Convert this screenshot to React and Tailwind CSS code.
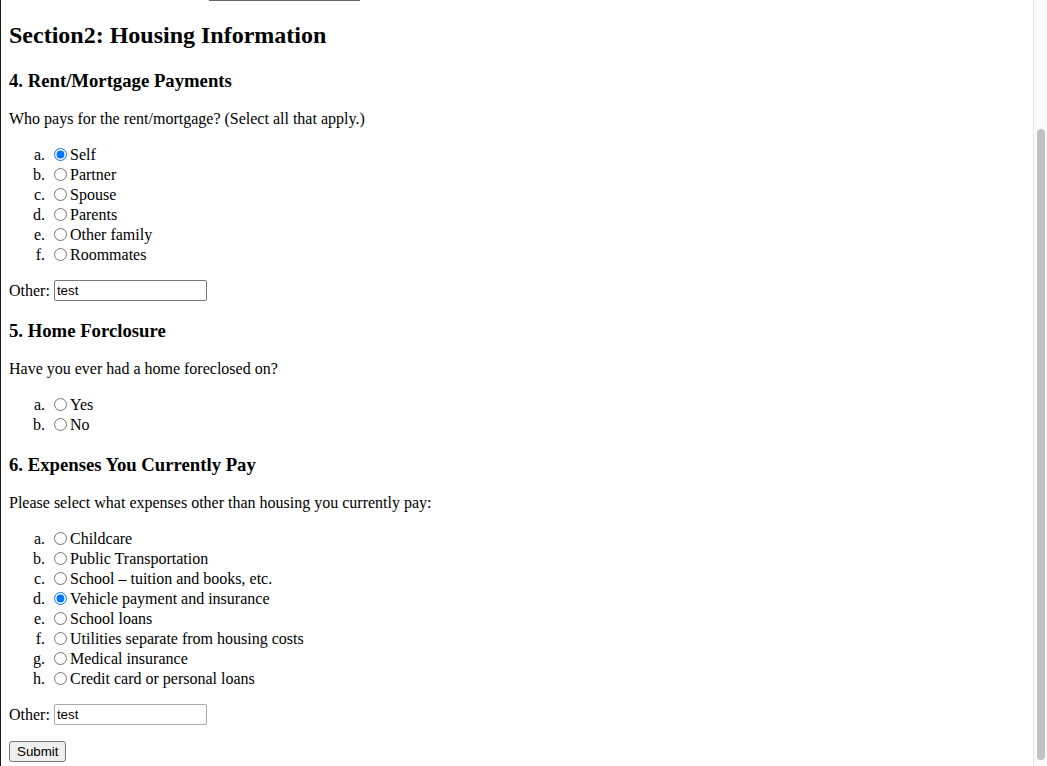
import React from "react";

const housingPayers = ["Self", "Partner", "Spouse", "Parents", "Other family", "Roommates"];
const expenses = [
  "Childcare",
  "Public Transportation",
  "School – tuition and books, etc.",
  "Vehicle payment and insurance",
  "School loans",
  "Utilities separate from housing costs",
  "Medical insurance",
  "Credit card or personal loans",
];

const RadioList = ({ name, items, checked, className = "" }) => (
  <ol className={`list-[lower-alpha] pl-[40px] ${className}`}>
    {items.map((item) => (
      <li key={item} className="h-[20px] pt-px leading-[19px]">
        <input
          type="radio"
          name={name + item}
          defaultChecked={item === checked}
          className="w-[13px] h-[13px] mt-[3px] mr-[3px] ml-[5px] align-[-1px] accent-[#0075ff]"
        />
        {item}
      </li>
    ))}
  </ol>
);

const OtherField = ({ className = "", dark }) => (
  <div className={`h-[22px] flex items-center ${className}`}>
    <span className="pt-px">Other:</span>
    <input
      type="text"
      defaultValue="test"
      className={`ml-[4px] w-[153px] h-[21px] border rounded-[2px] bg-white px-[2px] text-[13.33px] font-['Liberation_Sans',Arial,sans-serif] ${
        dark ? "border-[#767676]" : "border-[#a9a9a9]"
      }`}
    />
  </div>
);

export default function App() {
  return (
    <div className="flex h-[766px] overflow-hidden bg-white text-black font-['Liberation_Serif','Times_New_Roman',serif] text-[16px]">
      {/* Page */}
      <div className="flex-1 border-l border-[#1a1a1a] px-[8px]">
        <div className="ml-[200px] w-[151px] h-px bg-[#666]" />

        <h2 className="mt-[20px] text-[24px] leading-[28px] font-bold">Section2: Housing Information</h2>

        <h3 className="mt-[20px] pt-px text-[18.72px] leading-[21px] font-bold">4. Rent/Mortgage Payments</h3>
        <p className="mt-[18px] pt-px leading-[17px]">Who pays for the rent/mortgage? (Select all that apply.)</p>
        <RadioList name="payer" items={housingPayers} checked="Self" className="mt-[17px]" />
        <OtherField className="mt-[15px]" dark />

        <h3 className="mt-[18px] pt-px text-[18.72px] leading-[21px] font-bold">5. Home Forclosure</h3>
        <p className="mt-[18px] pt-px leading-[17px]">Have you ever had a home foreclosed on?</p>
        <RadioList name="foreclosure" items={["Yes", "No"]} className="mt-[17px]" />

        <h3 className="mt-[19px] pt-px text-[18.72px] leading-[21px] font-bold">6. Expenses You Currently Pay</h3>
        <p className="mt-[18px] pt-px leading-[17px]">Please select what expenses other than housing you currently pay:</p>
        <RadioList name="expense" items={expenses} checked="Vehicle payment and insurance" className="mt-[17px]" />
        <OtherField className="mt-[15px]" />

        <button className="mt-[16px] h-[21px] px-[7px] bg-[#efefef] border border-[#767676] rounded-[3px] text-[13.33px] leading-[19px] font-['Liberation_Sans',Arial,sans-serif]">
          Submit
        </button>
      </div>

      {/* Scrollbar */}
      <div className="w-[14px] border-l border-[#e6e6e6] bg-[#fafafa] flex flex-col pt-[129px] pb-[6px] pl-[3px] pr-[2px]">
        <div className="flex-1 rounded-full bg-[#c1c1c1]" />
      </div>
    </div>
  );
}
